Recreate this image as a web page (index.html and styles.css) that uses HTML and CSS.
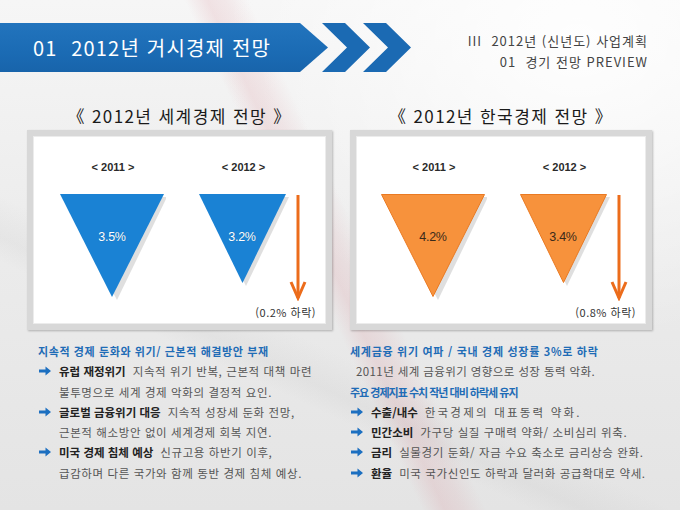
FILE: index.html
```html
<!DOCTYPE html>
<html lang="ko">
<head>
<meta charset="utf-8">
<title>2012년 거시경제 전망</title>
<link rel="stylesheet" href="styles.css">
</head>
<body>
<div class="page">
  <header class="header">
    <div class="band">01&nbsp;&nbsp;2012년 거시경제 전망</div>
    <svg class="chevrons" width="96" height="49" viewBox="0 0 96 49">
      <polygon points="4,0 27,0 52,24.5 27,49 4,49 29,24.5" fill="#1b6ab3"/>
      <polygon points="45,0 68,0 93,24.5 68,49 45,49 70,24.5" fill="#1b6ab3"/>
    </svg>
    <div class="crumbs">
      <div>III&nbsp;&nbsp;2012년 (신년도) 사업계획</div>
      <div>01&nbsp;&nbsp;경기 전망 PREVIEW</div>
    </div>
  </header>

  <div class="titles">
    <h2 class="title">《 2012년 세계경제 전망 》</h2>
    <h2 class="title">《 2012년 한국경제 전망 》</h2>
  </div>

  <div class="boxes">
    <section class="box box-left">
      <div class="charts">
        <div class="col col-a">
          <div class="year">&lt; 2011 &gt;</div>
          <div class="tri tri-a">
            <svg width="106" height="106" viewBox="0 0 106 106">
              <polygon points="3,3 107,3 57,106" fill="#c9c9c9" opacity="0.6"/>
              <polygon points="0,0 104,0 52,103" fill="#1a82d4"/>
            </svg>
            <span class="pct pct-blue">3.5%</span>
          </div>
        </div>
        <div class="col col-b">
          <div class="year">&lt; 2012 &gt;</div>
          <div class="tri tri-b">
            <svg width="90" height="92" viewBox="0 0 90 92">
              <polygon points="3,3 90,3 47,92" fill="#c9c9c9" opacity="0.6"/>
              <polygon points="0,0 87,0 43.5,89" fill="#1a82d4"/>
            </svg>
            <span class="pct pct-blue">3.2%</span>
          </div>
        </div>
        <svg class="down" width="18" height="106" viewBox="0 0 18 106">
          <line x1="9" y1="0" x2="9" y2="103" stroke="#ec6c1b" stroke-width="3"/>
          <polyline points="2,87 9,103 16,87" fill="none" stroke="#ec6c1b" stroke-width="3" stroke-linejoin="miter"/>
        </svg>
      </div>
      <div class="drop">(0.2% 하락)</div>
    </section>

    <section class="box box-right">
      <div class="charts">
        <div class="col col-a">
          <div class="year">&lt; 2011 &gt;</div>
          <div class="tri tri-a">
            <svg width="106" height="106" viewBox="0 0 106 106">
              <polygon points="3,3 107,3 57,106" fill="#c9c9c9" opacity="0.6"/>
              <polygon points="0.5,0.5 103.5,0.5 52,102.5" fill="#f7923c" stroke="#ea7a22" stroke-width="1"/>
            </svg>
            <span class="pct pct-dark">4.2%</span>
          </div>
        </div>
        <div class="col col-b">
          <div class="year">&lt; 2012 &gt;</div>
          <div class="tri tri-b">
            <svg width="90" height="92" viewBox="0 0 90 92">
              <polygon points="3,3 90,3 47,92" fill="#c9c9c9" opacity="0.6"/>
              <polygon points="0.5,0.5 86.5,0.5 43.5,88.5" fill="#f7923c" stroke="#ea7a22" stroke-width="1"/>
            </svg>
            <span class="pct pct-dark">3.4%</span>
          </div>
        </div>
        <svg class="down" width="18" height="106" viewBox="0 0 18 106">
          <line x1="9" y1="0" x2="9" y2="103" stroke="#ec6c1b" stroke-width="3"/>
          <polyline points="2,87 9,103 16,87" fill="none" stroke="#ec6c1b" stroke-width="3" stroke-linejoin="miter"/>
        </svg>
      </div>
      <div class="drop">(0.8% 하락)</div>
    </section>
  </div>

  <div class="notes">
    <div class="note note-left">
      <div class="head head-left">지속적 경제 둔화와 위기/ 근본적 해결방안 부재</div>
      <div class="item">
        <svg class="mark" width="12" height="10" viewBox="0 0 12 10"><path d="M0 3.6h6.5V0.5L12 5 6.5 9.5V6.4H0z" fill="#1c6fc0"/></svg>
        <div class="txt"><b>유럽 재정위기</b><span class="gap"></span>지속적 위기 반복, 근본적 대책 마련<br>불투명으로 세계 경제 악화의 결정적 요인.</div>
      </div>
      <div class="item">
        <svg class="mark" width="12" height="10" viewBox="0 0 12 10"><path d="M0 3.6h6.5V0.5L12 5 6.5 9.5V6.4H0z" fill="#1c6fc0"/></svg>
        <div class="txt"><b>글로벌 금융위기 대응</b><span class="gap"></span>지속적 성장세 둔화 전망,<br>근본적 해소방안 없이 세계경제 회복 지연.</div>
      </div>
      <div class="item">
        <svg class="mark" width="12" height="10" viewBox="0 0 12 10"><path d="M0 3.6h6.5V0.5L12 5 6.5 9.5V6.4H0z" fill="#1c6fc0"/></svg>
        <div class="txt"><b>미국 경제 침체 예상</b><span class="gap"></span>신규고용 하반기 이후,<br>급감하며 다른 국가와 함께 동반 경제 침체 예상.</div>
      </div>
    </div>

    <div class="note note-right">
      <div class="head head-wide">세계금융 위기 여파 / 국내 경제 성장률 3%로 하락</div>
      <div class="plain">2011년 세계 금융위기 영향으로 성장 동력 악화.</div>
      <div class="head head-tight">주요 경제지표 수치 작년 대비 하락세 유지</div>
      <div class="item">
        <svg class="mark" width="12" height="10" viewBox="0 0 12 10"><path d="M0 3.6h6.5V0.5L12 5 6.5 9.5V6.4H0z" fill="#1c6fc0"/></svg>
        <div class="txt txt-wide"><b>수출/내수</b><span class="gap"></span>한국경제의 대표동력 약화.</div>
      </div>
      <div class="item">
        <svg class="mark" width="12" height="10" viewBox="0 0 12 10"><path d="M0 3.6h6.5V0.5L12 5 6.5 9.5V6.4H0z" fill="#1c6fc0"/></svg>
        <div class="txt"><b>민간소비</b><span class="gap"></span>가구당 실질 구매력 약화/ 소비심리 위축.</div>
      </div>
      <div class="item">
        <svg class="mark" width="12" height="10" viewBox="0 0 12 10"><path d="M0 3.6h6.5V0.5L12 5 6.5 9.5V6.4H0z" fill="#1c6fc0"/></svg>
        <div class="txt"><b>금리</b><span class="gap"></span>실물경기 둔화/ 자금 수요 축소로 금리상승 완화.</div>
      </div>
      <div class="item">
        <svg class="mark" width="12" height="10" viewBox="0 0 12 10"><path d="M0 3.6h6.5V0.5L12 5 6.5 9.5V6.4H0z" fill="#1c6fc0"/></svg>
        <div class="txt"><b>환율</b><span class="gap"></span>미국 국가신인도 하락과 달러화 공급확대로 약세.</div>
      </div>
    </div>
  </div>
</div>
</body>
</html>
```

FILE: styles.css
```css
html, body {
  margin: 0;
  padding: 0;
}

body {
  width: 680px;
  height: 510px;
  overflow: hidden;
  font-family: "Noto Sans CJK KR", "Noto Sans", sans-serif;
  color: #333;
  background:
    linear-gradient(65deg, rgba(255,255,255,0) 0%, rgba(255,255,255,0) 46%, rgba(214,130,140,0.18) 48.5%, rgba(214,130,140,0.12) 50.5%, rgba(255,255,255,0) 53%),
    linear-gradient(25deg, rgba(255,255,255,0) 0%, rgba(255,255,255,0) 30%, rgba(150,150,150,0.08) 33%, rgba(255,255,255,0) 38%),
    radial-gradient(ellipse at 85% 8%, rgba(255,255,255,0.9), rgba(255,255,255,0) 45%),
    linear-gradient(180deg, #f6f6f6 0%, #ececec 45%, #e4e4e4 100%);
}

.page {
  padding-top: 23px;
}

/* header */
.header {
  display: flex;
  align-items: flex-start;
  height: 49px;
}

.band {
  box-sizing: border-box;
  width: 328px;
  height: 49px;
  flex: none;
  padding-left: 33px;
  display: flex;
  align-items: center;
  background: linear-gradient(180deg, #2274bd 0%, #1b6bb4 60%, #1864ab 100%);
  clip-path: polygon(0 0, 300px 0, 328px 50%, 300px 100%, 0 100%);
  color: #fff;
  font-size: 20px;
  line-height: 1;
  letter-spacing: 1.2px;
}

.chevrons {
  flex: none;
  margin-left: -10px;
  display: block;
}

.crumbs {
  margin-left: auto;
  padding-right: 32px;
  margin-top: 7px;
  text-align: right;
  font-size: 13px;
  line-height: 21px;
  letter-spacing: 1px;
  color: #444;
}

/* titles */
.titles {
  display: grid;
  grid-template-columns: 305px 302px;
  column-gap: 18px;
  padding-left: 27px;
  margin-top: 32px;
}

.title {
  margin: 0;
  text-align: center;
  font-size: 17px;
  line-height: 24px;
  font-weight: 400;
  letter-spacing: 1.4px;
  color: #1a1a1a;
}

/* boxes */
.boxes {
  display: grid;
  grid-template-columns: 305px 302px;
  column-gap: 18px;
  padding-left: 27px;
  margin-top: 2px;
}

.box {
  box-sizing: border-box;
  height: 200px;
  background: #fff;
  border: 6px solid #d8d8d8;
  box-shadow: 1px 1px 2px rgba(0,0,0,0.25), inset 0 0 0 1px #ececec;
  padding: 23px 0 0 28px;
  display: flex;
  flex-direction: column;
}

.box-right {
  padding-left: 26px;
}

.charts {
  display: flex;
  align-items: flex-start;
  height: 146px;
}

.col {
  display: flex;
  flex-direction: column;
  align-items: center;
}

.col-a { width: 104px; }
.col-b { width: 87px; margin-left: 35px; }

.year {
  font-family: "Liberation Sans", Arial, sans-serif;
  font-size: 11px;
  font-weight: 700;
  line-height: 16px;
  color: #2a2a2a;
}

.tri {
  display: grid;
  margin-top: 19px;
  justify-items: start;
}

.tri svg,
.tri .pct {
  grid-area: 1 / 1;
}

.tri svg { display: block; }

.pct {
  justify-self: center;
  margin-top: 35px;
  font-family: "Liberation Sans", Arial, sans-serif;
  font-size: 12.5px;
  line-height: 16px;
  letter-spacing: -0.3px;
}

.tri-a .pct { margin-right: 2px; }
.tri-b .pct { margin-right: 3px; }

.pct-blue {
  color: #fff;
  text-shadow: 0 0 1px rgba(0,0,0,0.25);
}

.pct-dark {
  color: #3a2a1a;
}

.down {
  display: block;
  margin-left: 2px;
  margin-top: 36px;
}

.drop {
  align-self: flex-end;
  margin-right: 10px;
  font-size: 11px;
  line-height: 14px;
  color: #333;
  letter-spacing: 0.5px;
}

/* notes */
.notes {
  display: grid;
  grid-template-columns: 312px 1fr;
  padding-left: 38px;
  margin-top: 11px;
  font-size: 11.5px;
  line-height: 20.3px;
}

.head {
  font-size: 11px;
  color: #1f6cb6;
  font-weight: 700;
  letter-spacing: 0.1px;
}

.head-left { letter-spacing: 0.6px; }
.head-wide { letter-spacing: 0.7px; }
.head-tight { letter-spacing: -1px; }

.plain {
  padding-left: 6px;
  color: #555;
  letter-spacing: 0.4px;
}

.item {
  display: flex;
  align-items: flex-start;
}

.mark {
  flex: none;
  display: block;
  margin: 5px 8px 0 1px;
}

.txt {
  color: #555;
  letter-spacing: 0.6px;
  white-space: nowrap;
}

.txt-wide { letter-spacing: 2.2px; }

.txt b {
  color: #222;
  font-weight: 700;
  letter-spacing: 0;
}

.gap {
  display: inline-block;
  width: 7px;
}
```
